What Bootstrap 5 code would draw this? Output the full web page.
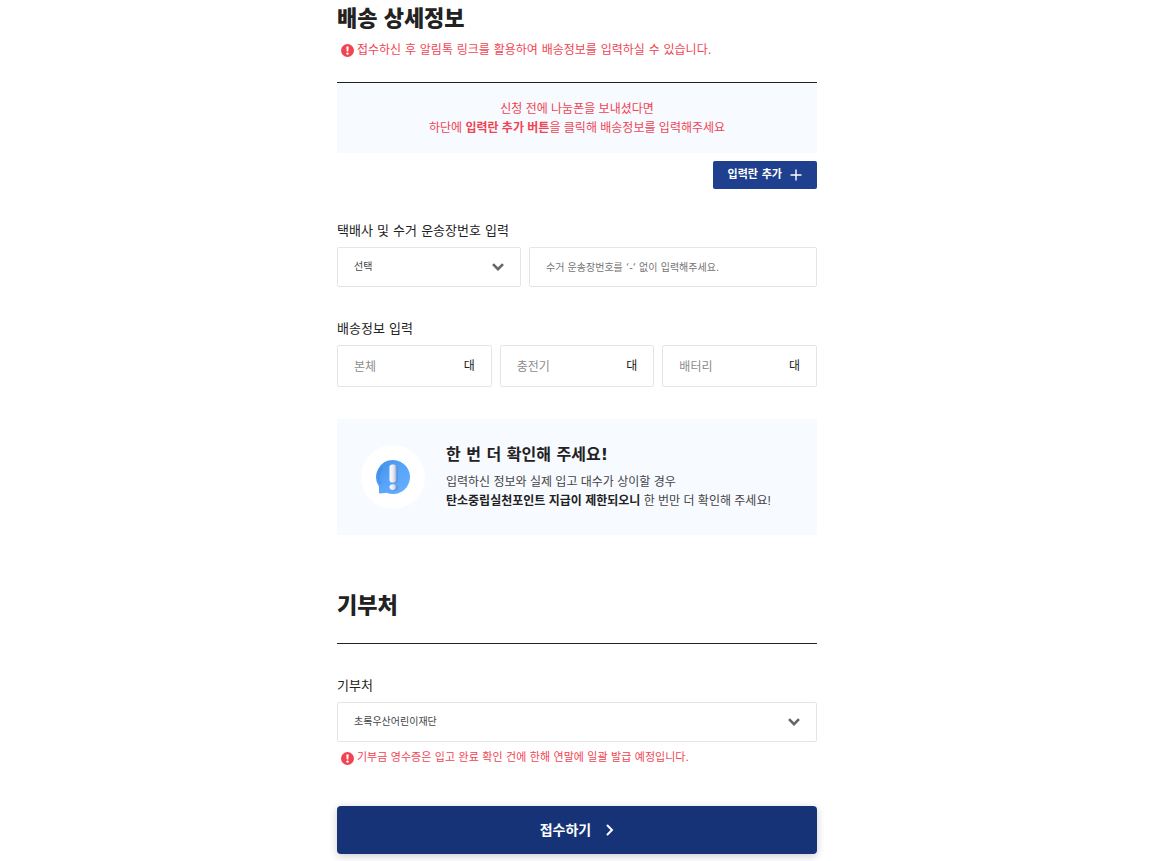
<!DOCTYPE html>
<html lang="ko">
<head>
<meta charset="utf-8">
<meta name="viewport" content="width=device-width, initial-scale=1">
<title>배송 상세정보</title>
<link href="https://cdn.jsdelivr.net/npm/bootstrap@5.3.0/dist/css/bootstrap.min.css" rel="stylesheet">
<style>
  body { font-family: "DejaVu Sans", "Noto Sans CJK KR", sans-serif; font-size: 12px; line-height: 20px; color: #222; padding-right: 14px; }
  .form-page { max-width: 480px; padding-bottom: 8px; }
  .section-title { font-family: "Noto Sans CJK KR", sans-serif; font-size: 22px; line-height: 32px; font-weight: 900; }
  .section-rule { border-top: 1px solid #222; }
  .hint { color: #f04452; padding-left: 4px; gap: 3px; }
  .hint-top { padding-bottom: 22px; }
  .hint-sm { font-size: 11px; margin-top: 6px; }
  .panel { background: #f7faff; }
  .notice { font-family: "Noto Sans CJK KR", sans-serif; line-height: 19px; color: #f04452; padding: 15px 16px 17px; }
  .btn-add { font-size: 11px; line-height: 28px; font-weight: 700; color: #fff; background: #1e408e; border: 0; border-radius: 2px; padding: 0 15px; gap: 8px; }
  .btn-add:hover { background: #17347a; color: #fff; }
  .field-label { font-size: 13px; line-height: 20px; margin-bottom: 6px; }
  .form-control.field, .form-select.field { height: 40px; font-size: 10px; line-height: 20px; color: #444; border: 1px solid #e5e5e5; border-radius: 2px; padding: 0 16px; }
  .form-select.field { background-size: 12px 8px; background-position: right 16px center;
    background-image: url("data:image/svg+xml,%3csvg xmlns='http://www.w3.org/2000/svg' viewBox='0 0 12 8'%3e%3cpath d='M1 1.200 6 6.200 11 1.200' fill='none' stroke='%23666' stroke-width='2.600'/%3e%3c/svg%3e"); }
  .field::placeholder { color: #757575; opacity: 1; }
  .col-carrier { flex: 0 0 184px; }
  .count-box { height: 42px; border: 1px solid #e5e5e5; border-radius: 2px; padding: 0 16px; }
  .count-box input { font-family: "Noto Sans CJK KR", sans-serif; font-size: 12px; min-width: 0; outline: 0; }
  .count-box input::placeholder { color: #8c8c8c; opacity: 1; }
  .confirm { padding: 24px; gap: 21px; }
  .confirm-icon { width: 64px; height: 64px; background: #fff; }
  .confirm-title { font-size: 16px; line-height: 24px; font-weight: 700; margin-bottom: 6px; }
  .confirm-text { font-family: "Liberation Sans", "Noto Sans CJK KR", sans-serif; line-height: 19px; color: #444; }
  .confirm-text strong { color: #222; }
  .btn-submit { height: 48px; font-size: 14px; font-weight: 700; color: #fff; background: #163377; border: 0; border-radius: 4px; gap: 15px; margin-top: 38px; box-shadow: 0 2px 8px rgba(0,0,0,.2); }
  .btn-submit:hover { background: #10285f; color: #fff; }
  .stack-lg { margin-top: 32px; }
</style>
</head>
<body>
<main class="form-page mx-auto">
  <form>
    <section>
      <h2 class="section-title mb-0">배송 상세정보</h2>
      <p class="hint hint-top d-flex align-items-center mb-0 mt-2">
        <svg width="13" height="13" viewBox="0 0 13 13" aria-hidden="true"><circle cx="6.5" cy="6.5" r="6.5" fill="#f04452"/><path d="M5.300 2.500h2.400L7.300 7.600H5.700z" fill="#fff"/><circle cx="6.5" cy="9.6" r="1.200" fill="#fff"/></svg>
        <span>접수하신 후 알림톡 링크를 활용하여 배송정보를 입력하실 수 있습니다.</span>
      </p>
      <div class="section-rule panel notice text-center">
        신청 전에 나눔폰을 보내셨다면<br>하단에 <strong>입력란 추가 버튼</strong>을 클릭해 배송정보를 입력해주세요
      </div>
      <div class="d-flex justify-content-end pt-2">
        <button type="button" class="btn btn-add d-flex align-items-center">입력란 추가
          <svg width="12" height="12" viewBox="0 0 12 12" aria-hidden="true"><path d="M6 .5v11M.5 6h11" stroke="#fff" stroke-width="1.4"/></svg>
        </button>
      </div>

      <div class="stack-lg">
        <label class="field-label d-block" for="carrier">택배사 및 수거 운송장번호 입력</label>
        <div class="d-flex gap-2">
          <div class="col-carrier">
            <select class="form-select field" id="carrier"><option>선택</option></select>
          </div>
          <input type="text" class="form-control field" aria-label="수거 운송장번호" placeholder="수거 운송장번호를 ‘-‘ 없이 입력해주세요.">
        </div>
      </div>

      <div class="stack-lg">
        <label class="field-label d-block" for="phones">배송정보 입력</label>
        <div class="d-flex gap-2">
          <div class="count-box d-flex align-items-center flex-fill w-100">
            <input type="text" class="border-0 p-0 w-100" id="phones" placeholder="본체"><label for="phones">대</label>
          </div>
          <div class="count-box d-flex align-items-center flex-fill w-100">
            <input type="text" class="border-0 p-0 w-100" id="chargers" placeholder="충전기"><label for="chargers">대</label>
          </div>
          <div class="count-box d-flex align-items-center flex-fill w-100">
            <input type="text" class="border-0 p-0 w-100" id="batteries" placeholder="배터리"><label for="batteries">대</label>
          </div>
        </div>
      </div>

      <div class="stack-lg panel confirm d-flex align-items-center">
        <div class="confirm-icon rounded-circle d-flex align-items-center justify-content-center flex-shrink-0">
          <svg width="36" height="36" viewBox="0 0 36 36" aria-hidden="true">
            <defs>
              <linearGradient id="bubble" x1="0" y1="0" x2="1" y2="1"><stop offset="0" stop-color="#3f8fe6"/><stop offset=".5" stop-color="#58a5fb"/><stop offset="1" stop-color="#68b0ff"/></linearGradient>
              <linearGradient id="bar" x1="0" x2="1"><stop offset="0" stop-color="#fff"/><stop offset=".55" stop-color="#e6e8f2"/><stop offset="1" stop-color="#a5acc4"/></linearGradient>
            </defs>
            <path d="M18 1a17 17 0 1 1-6.500 32.700L5 34.500q-1.200 0-1-1.500V27.500A17 17 0 0 1 18 1z" fill="url(#bubble)"/>
            <path d="M7 9A14.500 14.500 0 0 0 5.500 25" fill="none" stroke="#347fd1" stroke-width="2" opacity=".35"/>
            <rect x="16" y="6" width="6.500" height="18" rx="2.500" fill="#4b7fc5" opacity=".7"/>
            <rect x="14.500" y="5.500" width="7" height="18" rx="2.800" fill="url(#bar)"/>
            <ellipse cx="19" cy="28.500" rx="3.700" ry="3" fill="#4b7fc5" opacity=".7"/>
            <ellipse cx="18" cy="28.100" rx="3.500" ry="2.800" fill="url(#bar)"/>
          </svg>
        </div>
        <div>
          <h3 class="confirm-title">한 번 더 확인해 주세요!</h3>
          <p class="confirm-text mb-0">입력하신 정보와 실제 입고 대수가 상이할 경우<br><strong>탄소중립실천포인트 지급이 제한되오니</strong> 한 번만 더 확인해 주세요!</p>
        </div>
      </div>
    </section>

    <section class="pt-1 mt-5">
      <h2 class="section-title mb-0 pb-4">기부처</h2>
      <div class="section-rule"></div>
      <div class="stack-lg">
        <label class="field-label d-block" for="charity">기부처</label>
        <select class="form-select field" id="charity"><option>초록우산어린이재단</option></select>
      </div>
      <p class="hint hint-sm d-flex align-items-center mb-0">
        <svg width="13" height="13" viewBox="0 0 13 13" aria-hidden="true"><circle cx="6.5" cy="6.5" r="6.5" fill="#f04452"/><path d="M5.300 2.500h2.400L7.300 7.600H5.700z" fill="#fff"/><circle cx="6.5" cy="9.6" r="1.200" fill="#fff"/></svg>
        <span>기부금 영수증은 입고 완료 확인 건에 한해 연말에 일괄 발급 예정입니다.</span>
      </p>
    </section>

    <button type="submit" class="btn btn-submit w-100 d-flex align-items-center justify-content-center">접수하기
      <svg width="8" height="12" viewBox="0 0 8 12" aria-hidden="true"><path d="M1.500 1.500 6 6l-4.500 4.500" fill="none" stroke="#fff" stroke-width="2" stroke-linecap="round"/></svg>
    </button>
  </form>
</main>
<script src="https://cdn.jsdelivr.net/npm/bootstrap@5.3.0/dist/js/bootstrap.bundle.min.js"></script>
</body>
</html>
